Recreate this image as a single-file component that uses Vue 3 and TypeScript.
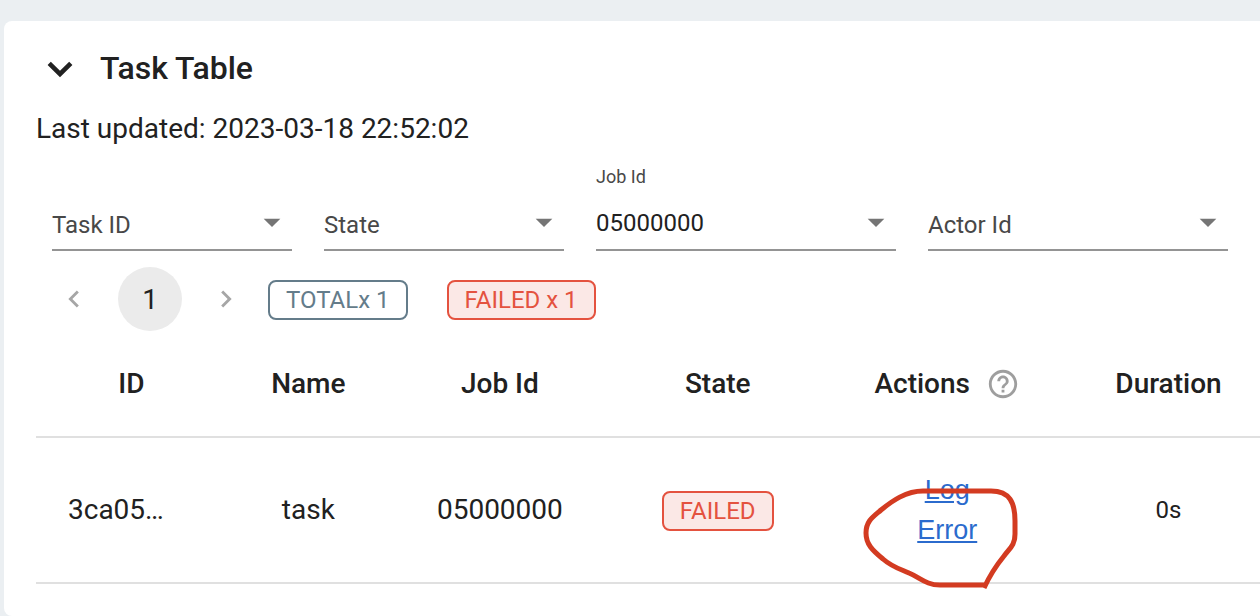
<script setup lang="ts">
import { reactive } from 'vue'

interface Filter {
  id: string
  label: string
  value: string
  wide: boolean
}

interface Task {
  id: string
  name: string
  jobId: string
  state: string
  duration: string
}

const filters = reactive<Filter[]>([
  { id: 'task-id', label: 'Task ID', value: '', wide: false },
  { id: 'state', label: 'State', value: '', wide: false },
  { id: 'job-id', label: 'Job Id', value: '05000000', wide: true },
  { id: 'actor-id', label: 'Actor Id', value: '', wide: true },
])

const tasks: Task[] = [
  { id: '3ca05…', name: 'task', jobId: '05000000', state: 'FAILED', duration: '0s' },
]
</script>

<template>
  <main class="page">
    <section class="card">
      <header class="heading">
        <button class="toggle" type="button" aria-label="Collapse task table" aria-expanded="true">
          <svg viewBox="0 0 24 24" width="48" height="48" fill="currentColor">
            <path d="M16.59 8.35 12 12.93 7.41 8.35 5.8 9.95l6.2 6.2 6.2-6.2z" />
          </svg>
        </button>
        <h2 class="title">Task Table</h2>
      </header>

      <p class="updated">Last updated: 2023-03-18 22:52:02</p>

      <div class="filters">
        <div
          v-for="filter in filters"
          :key="filter.id"
          class="field"
          :class="{ wide: filter.wide, filled: filter.value !== '' }"
        >
          <label class="field-label" :for="filter.id">{{ filter.label }}</label>
          <div class="control">
            <input :id="filter.id" v-model="filter.value" class="input" type="text" autocomplete="off" />
            <button class="open" type="button" :aria-label="`Open ${filter.label} options`">
              <svg viewBox="0 0 24 24" width="40" height="40" fill="currentColor">
                <path d="m7 10 5 5 5-5z" />
              </svg>
            </button>
          </div>
        </div>
      </div>

      <div class="toolbar">
        <nav class="pager" aria-label="Pagination">
          <button class="page-button" type="button" aria-label="Previous page" disabled>
            <svg viewBox="0 0 24 24" width="34" height="34" fill="currentColor">
              <path d="M15.41 7.41 14 6l-6 6 6 6 1.41-1.41L10.83 12z" />
            </svg>
          </button>
          <button class="page-button current" type="button" aria-current="page">1</button>
          <button class="page-button" type="button" aria-label="Next page" disabled>
            <svg viewBox="0 0 24 24" width="34" height="34" fill="currentColor">
              <path d="M10 6 8.59 7.41 13.17 12l-4.58 4.59L10 18l6-6z" />
            </svg>
          </button>
        </nav>
        <div class="counts">
          <span class="chip">TOTALx 1</span>
          <span class="chip failed">FAILED x 1</span>
        </div>
      </div>

      <table class="tasks">
        <colgroup>
          <col class="col-id" />
          <col class="col-name" />
          <col class="col-job" />
          <col class="col-state" />
          <col class="col-actions" />
          <col />
        </colgroup>
        <thead>
          <tr>
            <th scope="col">ID</th>
            <th scope="col">Name</th>
            <th scope="col">Job Id</th>
            <th scope="col">State</th>
            <th scope="col">
              <span class="with-help">
                Actions
                <svg class="help" viewBox="0 0 24 24" width="34" height="34" fill="currentColor" aria-hidden="true">
                  <path
                    d="M11 18h2v-2h-2v2zm1-16C6.48 2 2 6.48 2 12s4.48 10 10 10 10-4.48 10-10S17.52 2 12 2zm0 18c-4.41 0-8-3.59-8-8s3.59-8 8-8 8 3.59 8 8-3.59 8-8 8zm0-14c-2.21 0-4 1.79-4 4h2c0-1.1.9-2 2-2s2 .9 2 2c0 2-3 1.75-3 5h2c0-2.25 3-2.5 3-5 0-2.21-1.79-4-4-4z"
                  />
                </svg>
              </span>
            </th>
            <th scope="col" class="duration">Duration</th>
          </tr>
        </thead>
        <tbody>
          <tr v-for="task in tasks" :key="task.id">
            <td class="id">{{ task.id }}</td>
            <td>{{ task.name }}</td>
            <td>{{ task.jobId }}</td>
            <td><span class="chip failed">{{ task.state }}</span></td>
            <td>
              <div class="actions">
                <a href="#log">Log</a>
                <a href="#error">Error</a>
                <svg class="marker" viewBox="0 0 160 110" width="160" height="110" aria-hidden="true">
                  <path
                    d="M126 101H79C65 101 60 94 48 89C39 85 31 83 22 75C11 66 5 60 5 49C5 37 12 33 20 26C31 17 45 7 62 7H130C149 7 154 19 154 37V50C154 61 149 64 143 72C134 83 129 91 123 104"
                  />
                </svg>
              </div>
            </td>
            <td class="duration small">{{ task.duration }}</td>
          </tr>
        </tbody>
      </table>
    </section>
  </main>
</template>

<style>
body {
  margin: 0;
  background: #ebeff2;
}
</style>

<style scoped>
.page {
  padding: 21px 0 0 4px;
  overflow: hidden;
  color: #212121;
  font-family: Roboto, "Liberation Sans", sans-serif;
  font-size: 28px;
}

.card {
  padding: 24px 0 32px 32px;
  border-radius: 8px 0 0 8px;
  background: #fff;
}

button,
input {
  margin: 0;
  padding: 0;
  border: 0;
  background: none;
  color: inherit;
  font: inherit;
}

svg {
  display: block;
}

.heading {
  display: flex;
  gap: 16px;
}

.title {
  margin: 0;
  font-size: 32px;
  font-weight: 500;
  line-height: 46px;
}

.updated {
  margin: 16px 0;
  line-height: 40px;
}

.filters {
  display: flex;
  gap: 32px;
  padding: 0 32px 0 16px;
}

.field {
  position: relative;
  flex: 4 1 0;
  min-width: 0;
  padding-top: 32px;
}

.field.wide {
  flex-grow: 5;
}

.field-label {
  position: absolute;
  top: 44px;
  left: 0;
  color: #484848;
  font-size: 24px;
  line-height: 32px;
  pointer-events: none;
}

.filled .field-label {
  top: 0;
  font-size: 18px;
  line-height: 24px;
}

.control {
  display: flex;
  align-items: center;
  height: 52px;
  border-bottom: 2px solid #949494;
}

.input {
  flex: 1;
  min-width: 0;
  font-size: 24px;
  line-height: 32px;
  outline: none;
}

.open {
  padding-bottom: 2px;
  color: #757575;
}

.toolbar {
  display: flex;
  align-items: center;
  gap: 10px;
  padding: 16px 0 1px 6px;
}

.pager {
  display: flex;
  gap: 12px;
}

.page-button {
  display: flex;
  align-items: center;
  justify-content: center;
  width: 64px;
  height: 64px;
  border-radius: 50%;
}

.page-button:disabled {
  color: #a6a6a6;
}

.page-button.current {
  background: #ebebeb;
}

.counts {
  display: flex;
  gap: 39px;
  padding-top: 2px;
}

.chip {
  display: inline-block;
  box-sizing: border-box;
  height: 40px;
  padding: 0 16px;
  border: 2px solid #647c8a;
  border-radius: 8px;
  color: #647c8a;
  font-size: 24px;
  line-height: 36px;
  vertical-align: middle;
}

.chip.failed {
  border-color: #e4523f;
  background: #fbe8e6;
  color: #e4523f;
}

.tasks {
  width: 100%;
  table-layout: fixed;
  border-collapse: separate;
  border-spacing: 0;
}

.col-id {
  width: 15.6%;
}

.col-name {
  width: 13.3%;
}

.col-job {
  width: 18%;
}

.col-state {
  width: 17.6%;
}

.col-actions {
  width: 19.9%;
}

th,
td {
  padding: 32px 0;
  border-bottom: 2px solid #e0e0e0;
  line-height: 40px;
  text-align: center;
}

th {
  font-weight: 500;
}

.id {
  padding-left: 32px;
  text-align: left;
}

.duration {
  padding-left: 8px;
}

.small {
  font-size: 24px;
}

.with-help {
  display: inline-flex;
  align-items: center;
  gap: 16px;
}

.help {
  color: #9e9e9e;
}

.actions {
  position: relative;
  display: flex;
  flex-direction: column;
  align-items: center;
}

.actions a {
  color: #2b6bcd;
  font-family: "Liberation Sans", Arial, sans-serif;
  font-size: 27px;
}

.marker {
  position: absolute;
  top: 14px;
  left: calc(50% - 86px);
  fill: none;
  stroke: #d33b21;
  stroke-width: 5px;
  stroke-linejoin: round;
  pointer-events: none;
}
</style>
